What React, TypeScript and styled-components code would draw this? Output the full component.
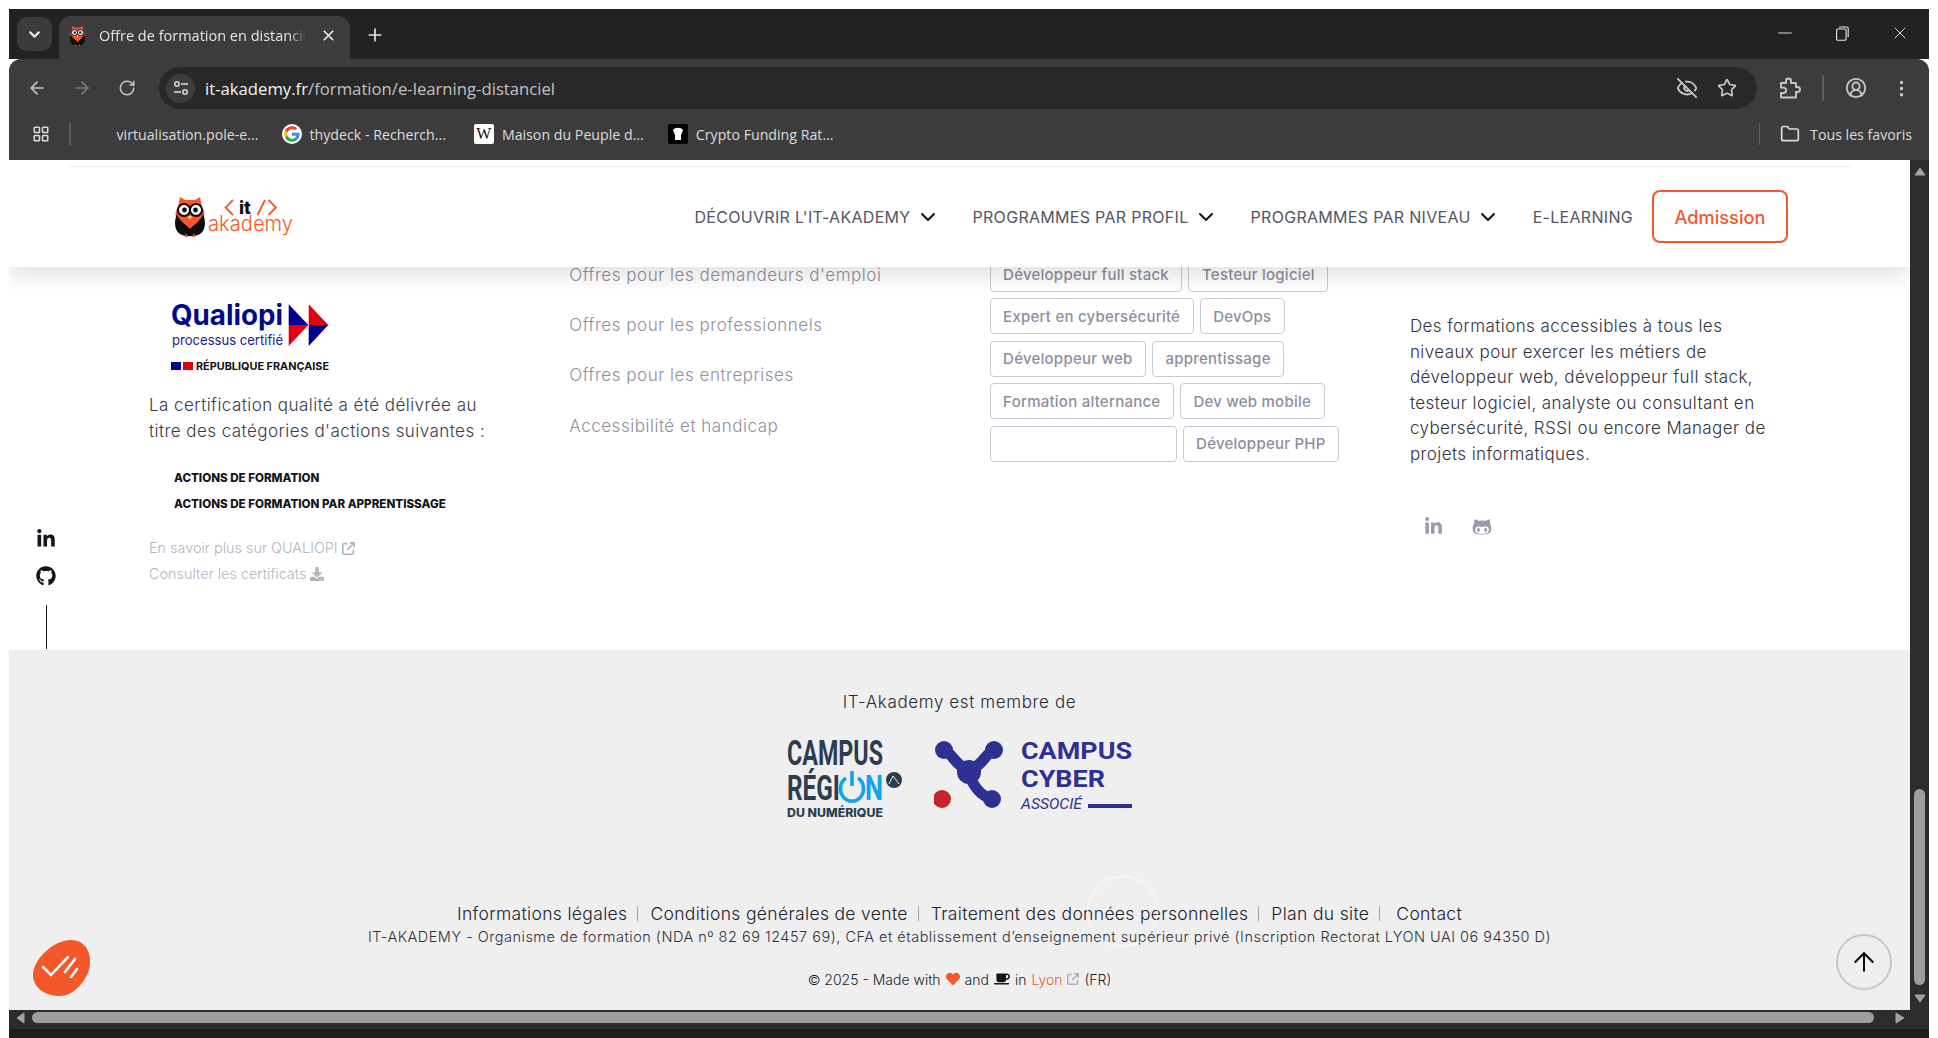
import React from 'react';
import styled, { createGlobalStyle } from 'styled-components';
import { ArrowLeft, ArrowRight, RotateCw, Plus, X, EyeOff, Star, CircleUserRound, MoreVertical, LayoutGrid, Folder, Minus, ChevronDown, ArrowUp } from 'lucide-react';
import { FaLinkedinIn, FaGithub, FaGithubAlt, FaHeart, FaCoffee, FaDownload } from 'react-icons/fa';
import { FaArrowUpRightFromSquare } from 'react-icons/fa6';

const UI = `"Open Sans", "Liberation Sans", sans-serif`;
const WEB = `Inter, "Liberation Sans", sans-serif`;

const Global = createGlobalStyle`
  html, body { margin: 0; padding: 0; background: #fff; overflow: hidden; }
  * { box-sizing: border-box; }
`;

const Frame = styled.div`
  width: 1938px; height: 1038px; padding: 9px 9px 0; background: #fff;
  display: flex; flex-direction: column; overflow: hidden;
`;
const TabStrip = styled.div`
  height: 50px; flex: none; background: #202322; display: flex; align-items: flex-end;
  padding-left: 8px; color: #e8e8e8; font-family: ${UI};
`;
const TabSwitcher = styled.div`
  width: 35px; height: 34px; margin-bottom: 8px; border-radius: 10px; background: #3a3b3b;
  display: flex; align-items: center; justify-content: center; color: #e8e8e8;
`;
const Tab = styled.div`
  width: 291px; height: 43px; margin-left: 7px; border-radius: 12px 12px 0 0; background: #3c3c3c;
  display: flex; align-items: center; padding: 0 13px 4px 11px; gap: 14px; position: relative;
`;
const TabTitle = styled.span`
  flex: 1; font-size: 14.5px; white-space: nowrap; overflow: hidden; color: #e6e6e6;
  mask-image: linear-gradient(90deg, #000 92%, transparent);
`;
const NewTab = styled.div` margin: 0 0 12px 15px; height: 24px; display: flex; align-items: center; color: #e8e8e8; `;
const WindowButtons = styled.div` margin-left: auto; height: 100%; display: flex; align-items: center; padding-bottom: 2px; color: #e8e8e8; `;
const WindowButton = styled.div`
  width: 57.5px; display: flex; justify-content: center; align-items: center;
`;
const Toolbar = styled.div`
  height: 101px; flex: none; background: #3c3c3c; border-radius: 12px 12px 0 0; display: flex; flex-direction: column;
  color: #c7c7c7; font-family: ${UI};
`;
const NavRow = styled.div` height: 58px; padding: 8px 0 0 5px; display: flex; align-items: flex-start; `;
const NavButton = styled.div<{ $w: number; $dim?: boolean }>`
  width: ${p => p.$w}px; height: 42px; display: flex; align-items: center; justify-content: center;
  color: ${p => (p.$dim ? '#7d7d7d' : '#c7c7c7')};
`;
const Omnibox = styled.div`
  width: 1598px; height: 42px; margin-left: 9px; border-radius: 21px; background: #282828; display: flex; align-items: center; padding: 0 20px 0 7px;
`;
const TuneBadge = styled.div`
  width: 29px; height: 29px; border-radius: 50%; background: #3c3c3c; display: flex; align-items: center; justify-content: center; margin-right: 10px;
`;
const Url = styled.div` font-size: 16.7px; color: #c2c2c2; flex: 1; white-space: nowrap; `;
const Host = styled.span` color: #f2f2f2; `;
const OmniIcons = styled.div` display: flex; align-items: center; gap: 19px; color: #c7c7c7; `;
const ToolIcons = styled.div` display: flex; align-items: center; height: 42px; color: #c7c7c7; margin-left: 20px; `;
const VSep = styled.div<{ $h: number; $mx: number }>`
  width: 1.5px; height: ${p => p.$h}px; background: #5d5d5d; margin: 0 ${p => p.$mx}px;
`;
const Dots = styled.div` margin-left: 24px; display: flex; `;
const BookmarkRow = styled.div` height: 43px; display: flex; align-items: center; padding: 0 0 9px 23px; font-size: 14.2px; color: #dcdcdc; `;
const Bookmark = styled.div<{ $ml: number }>`
  display: flex; align-items: center; gap: 8px; margin-left: ${p => p.$ml}px; white-space: nowrap;
`;
const FavSquare = styled.div<{ $bg: string; $c: string }>`
  width: 20px; height: 20px; border-radius: 2px; background: ${p => p.$bg}; color: ${p => p.$c};
  font: 400 16px "Liberation Serif", serif; display: flex; align-items: center; justify-content: center;
`;
const AllFav = styled.div` margin-left: auto; padding-right: 17px; display: flex; align-items: center; gap: 10px; `;

const Body = styled.div` height: 850px; flex: none; display: flex; `;
const Viewport = styled.div` width: 1901px; height: 850px; position: relative; overflow: hidden; background: #fff; font-family: ${WEB}; display: flex; flex-direction: column; `;
const VBar = styled.div` width: 19px; background: #2c2c2c; display: flex; flex-direction: column; align-items: center; padding: 6px 0 5px; `;
const Thumb = styled.div` width: 11px; height: 196px; border-radius: 6px; background: #9e9e9e; margin: auto 0 8px; `;
const HBar = styled.div` height: 19px; flex: none; background: #2c2c2c; display: flex; align-items: center; padding: 0 23px 4px 6px; `;
const HThumb = styled.div` height: 11px; flex: 1; margin: 0 20px 0 5px; border-radius: 6px; background: #9e9e9e; `;
const Tail = styled.div` flex: 1; background: #1f1f1f; `;

const Header = styled.header`
  height: 107px; flex: none; background: #fff; box-shadow: 0 8px 22px rgba(0,0,0,.12); position: relative; z-index: 2;
  display: flex; align-items: center; justify-content: space-between; padding: 6px 122px 0 165px;
  &::before { content: ''; position: absolute; left: 59px; right: 58px; top: 6px; height: 1px; background: #eeeeee; }
`;
const Nav = styled.nav` display: flex; align-items: center; `;
const NavList = styled.div` display: flex; align-items: center; gap: 33px; `;
const NavItem = styled.div`
  display: flex; align-items: center; gap: 5px; font-size: 16px; font-weight: 400; color: #55555f; letter-spacing: .3px; white-space: nowrap;
  svg { color: #111; }
`;
const Admission = styled.div`
  width: 136px; height: 53px; margin-left: 19px; padding-top: 1px; border: 2px solid #f4572a; border-radius: 8px; color: #f4572a;
  display: flex; align-items: center; justify-content: center; font-size: 18.2px; font-weight: 500;
`;

const Main = styled.main`
  height: 393px; flex: none; margin-top: -10px; padding-left: 140px;
  display: grid; grid-template-columns: repeat(4, 420.3px); position: relative; z-index: 1;
`;
const QualiCol = styled.div` padding-top: 46px; display: flex; flex-direction: column; `;
const QualiLogo = styled.div` margin-left: 22px; height: 69px; `;
const QualiText = styled.p`
  margin: 20px 0 0; font-size: 17px; line-height: 26px; font-weight: 300; color: #3a3a4a; letter-spacing: .45px; white-space: nowrap;
`;
const ActionList = styled.ul` list-style: none; margin: 21px 0 0; padding: 0 0 0 25px; `;
const ActionItem = styled.li` font-size: 11.6px; line-height: 26px; font-weight: 800; color: #14141c; white-space: nowrap; `;
const SoftLinks = styled.div` margin-top: 18px; display: flex; flex-direction: column; `;
const SoftLink = styled.a`
  font-size: 14.4px; line-height: 26px; font-weight: 300; color: #b4b4c0; display: flex; align-items: center; gap: 4px;
`;
const OfferCol = styled.div` padding-top: 5px; display: flex; flex-direction: column; gap: 24.2px; `;
const Offer = styled.a` font-size: 17px; line-height: 26px; font-weight: 300; color: #8f8f9c; letter-spacing: .52px; white-space: nowrap; `;
const Tags = styled.div` width: 370px; margin-top: -1px; display: flex; flex-wrap: wrap; align-content: flex-start; gap: 6.4px 6px; `;
const Tag = styled.a<{ $blank?: number }>`
  height: 36px; padding: 0 12.5px; border: 1px solid #c9c9d6; border-radius: 4px; font-size: 15px; font-weight: 500; letter-spacing: .24px; color: #8e8e9f;
  display: flex; align-items: center; white-space: nowrap; width: ${p => (p.$blank ? `${p.$blank}px` : 'auto')};
`;
const AboutCol = styled.div` padding-top: 57px; display: flex; flex-direction: column; `;
const About = styled.p` margin: 0; width: 365px; font-size: 17px; line-height: 25.6px; font-weight: 300; color: #33333f; letter-spacing: .42px; `;
const AboutSocial = styled.div` margin-top: 49px; padding-left: 14px; display: flex; align-items: center; gap: 29px; color: #9a9aae; `;

const Footer = styled.footer`
  flex: 1; background: #efefef; display: flex; flex-direction: column; align-items: center; padding-top: 42px; color: #2a2a36;
`;
const Member = styled.div` font-size: 17px; line-height: 20px; font-weight: 300; letter-spacing: .62px; `;
const LogoRow = styled.div` margin-top: 28px; height: 77px; display: flex; align-items: flex-start; gap: 32px; `;
const LegalLinks = styled.div` margin-top: 83px; height: 26px; display: flex; align-items: center; font-size: 17.5px; font-weight: 300; color: #22222e; letter-spacing: .33px; `;
const Pipe = styled.span<{ $ml?: number; $mr?: number }>`
  width: 1px; height: 15px; background: #a5a5b0; margin: 0 ${p => p.$mr ?? 12}px 0 ${p => p.$ml ?? 10}px;
`;
const Legal = styled.div` height: 22px; line-height: 22px; font-size: 14.5px; font-weight: 300; color: #30303c; letter-spacing: .5px; white-space: nowrap; `;
const Copy = styled.div` margin-top: 20px; height: 22px; display: flex; align-items: center; gap: 5px; font-size: 14px; font-weight: 300; color: #22222e; `;
const Lyon = styled.span` color: #f4572a; `;
const Muted = styled.span` color: #b0b0bc; display: inline-flex; `;

const SideRail = styled.div`
  position: absolute; left: 27px; top: 369px; width: 20px; display: flex; flex-direction: column; align-items: center; color: #14141c; z-index: 3;
`;
const RailLine = styled.div` width: 1px; height: 44px; background: #14141c; margin-top: 19px; `;
const BlobButton = styled.div` position: absolute; left: 24px; top: 780px; width: 58px; height: 56px; z-index: 3; `;
const UpButton = styled.div`
  position: absolute; left: 1827px; top: 774px; width: 56px; height: 56px; border-radius: 50%; border: 2px solid #c4c6d0;
  display: flex; align-items: center; justify-content: center; color: #0a0a0a; z-index: 3;
`;
const GhostRing = styled.div`
  position: absolute; left: 1078px; top: 716px; width: 71px; height: 71px; border-radius: 50%; border: 1px solid rgba(255,255,255,.75); z-index: 3;
`;

const Owl = ({ h }: { h: number }) => (
  <svg width={(h * 30) / 40} height={h} viewBox="0 0 30 40" style={{ flex: 'none' }}>
    <path d="M5 0 L10 3 H20 L25 0 L27 10 C30 14 30 18 28 22 L15 30 L2 22 C0 18 0 14 3 10 Z" fill="#f4572a" />
    <path d="M2 17 C-1 24 -1 33 5 37 C10 40 20 40 25 37 C31 33 31 24 28 17 C27 22 21 27 15 30 C9 27 3 22 2 17 Z" fill="#0d0d0d" />
    <path d="M7 24 L15 32 L23 24 C20 21 10 21 7 24 Z" fill="#f4572a" />
    <path d="M11 36 L10 40 H13 Z M19 36 L20 40 H17 Z" fill="#f4572a" />
    <circle cx="9" cy="13" r="6" fill="#fff" stroke="#0d0d0d" strokeWidth="2" />
    <circle cx="21" cy="13" r="6" fill="#fff" stroke="#0d0d0d" strokeWidth="2" />
    <circle cx="9.5" cy="13" r="2.4" fill="#0d0d0d" />
    <circle cx="20.5" cy="13" r="2.4" fill="#0d0d0d" />
    <path d="M13 19 L15 23 L17 19 Z" fill="#f9c09b" />
  </svg>
);

const SiteLogo = () => (
  <svg width="121" height="40" viewBox="0 0 121 40" style={{ flex: 'none' }}>
    <g transform="translate(1 0)"><Owl h={40} /></g>
    <path d="M59 3 L51.5 10.5 L59 18" fill="none" stroke="#f4572a" strokeWidth="1.8" />
    <path d="M94.5 3 L102 10.5 L94.5 18" fill="none" stroke="#f4572a" strokeWidth="1.8" />
    <text x="65" y="17" fontFamily="Inter, sans-serif" fontWeight="800" fontSize="18" fill="#111">it</text>
    <path d="M83.5 18 L91 3" stroke="#f4572a" strokeWidth="1.8" />
    <text x="34" y="34" fontFamily="Inter, sans-serif" fontWeight="300" fontSize="21" fill="#f4572a" textLength="85" lengthAdjust="spacingAndGlyphs">akademy</text>
  </svg>
);

const Qualiopi = () => (
  <svg width="158" height="69" viewBox="0 0 158 69">
    <text x="0" y="22" fontFamily="Inter, sans-serif" fontWeight="700" fontSize="28" fill="#000a8c" textLength="112" lengthAdjust="spacingAndGlyphs">Qualiopi</text>
    <text x="1" y="42" fontFamily="Inter, sans-serif" fontWeight="400" fontSize="14" fill="#22228c" textLength="111" lengthAdjust="spacingAndGlyphs">processus certifié</text>
    <path d="M117.7 1.3 L137.3 22 H117.7 Z M137.7 22 H157.3 L137.7 43 Z" fill="#00008f" />
    <path d="M117.7 43 L137.3 22 H117.7 Z M137.7 1.3 L157.3 22 H137.7 Z" fill="#e1000f" />
    <rect x="0" y="59" width="10" height="8" fill="#00008f" />
    <rect x="10" y="59" width="2" height="8" fill="#fff" />
    <rect x="12" y="59" width="10" height="8" fill="#e1000f" />
    <text x="25" y="67" fontFamily="Inter, sans-serif" fontWeight="700" fontSize="11" fill="#111" textLength="133" lengthAdjust="spacingAndGlyphs">RÉPUBLIQUE FRANÇAISE</text>
  </svg>
);

const CampusRegion = () => (
  <svg width="115" height="77" viewBox="0 0 115 77">
    <g fontFamily="Roboto, sans-serif" fontWeight="700" fontSize="35">
      <text x="0" y="25" fill="#2b3e50" textLength="96" lengthAdjust="spacingAndGlyphs">CAMPUS</text>
      <text x="0" y="60" fill="#2b3e50" textLength="53" lengthAdjust="spacingAndGlyphs">RÉGI</text>
      <text x="78" y="60" fill="#12a5e8" textLength="18" lengthAdjust="spacingAndGlyphs">N</text>
    </g>
    <path d="M59 38 A11.5 12.5 0 1 0 71 38" fill="none" stroke="#12a5e8" strokeWidth="3.6" />
    <path d="M65 31 V46" stroke="#12a5e8" strokeWidth="3.6" />
    <text x="0" y="77" fontFamily="Inter, sans-serif" fontWeight="800" fontSize="11.5" fill="#2b3e50" textLength="96" lengthAdjust="spacingAndGlyphs">DU NUMÉRIQUE</text>
    <circle cx="107" cy="40" r="8" fill="#2b3e50" />
    <path d="M102 44 L106 36 L112 44" fill="none" stroke="#efefef" strokeWidth="1" />
  </svg>
);

const CampusCyber = () => (
  <svg width="198" height="70" viewBox="0 0 198 70">
    <g fill="none" stroke="#2e3192" strokeWidth="11" strokeLinecap="round">
      <path d="M10 10 C18 12 22 28 35 29 C48 28 52 12 60 10" />
      <path d="M33 30 C38 44 46 56 58 59" />
    </g>
    <circle cx="10" cy="10" r="9" fill="#2e3192" />
    <circle cx="60" cy="10" r="9" fill="#2e3192" />
    <circle cx="58" cy="59" r="9" fill="#2e3192" />
    <circle cx="35" cy="32" r="12" fill="#2e3192" />
    <circle cx="8" cy="59" r="9" fill="#c4262e" />
    <g fontFamily="Roboto, sans-serif" fontWeight="700" fontSize="24" fill="#2e3192">
      <text x="87" y="19" textLength="111" lengthAdjust="spacingAndGlyphs">CAMPUS</text>
      <text x="87" y="47" textLength="84" lengthAdjust="spacingAndGlyphs">CYBER</text>
    </g>
    <text x="87" y="69" fontFamily="Roboto, sans-serif" fontStyle="italic" fontSize="14.5" fill="#2e3192" textLength="61" lengthAdjust="spacingAndGlyphs">ASSOCIÉ</text>
    <rect x="154" y="64" width="44" height="4" fill="#2e3192" />
  </svg>
);

const GoogleG = () => (
  <svg width="20" height="20" viewBox="0 0 48 48" style={{ background: '#fff', borderRadius: '50%', padding: 2 }}>
    <path fill="#EA4335" d="M24 9.5c3.5 0 6.7 1.2 9.2 3.6l6.9-6.9C35.9 2.4 30.5 0 24 0 14.6 0 6.5 5.4 2.6 13.2l8 6.2C12.5 13.6 17.8 9.5 24 9.5z" />
    <path fill="#4285F4" d="M46.9 24.5c0-1.6-.1-3.1-.4-4.5H24v9h12.9c-.6 3-2.2 5.5-4.8 7.2l7.7 6c4.5-4.2 7.1-10.3 7.1-17.7z" />
    <path fill="#FBBC05" d="M10.5 28.6c-.5-1.4-.8-3-.8-4.6s.3-3.2.8-4.6l-8-6.2C.9 16.5 0 20.1 0 24s.9 7.5 2.6 10.8l7.9-6.2z" />
    <path fill="#34A853" d="M24 48c6.5 0 11.9-2.1 15.9-5.8l-7.7-6c-2.2 1.4-4.9 2.3-8.2 2.3-6.2 0-11.5-4.2-13.4-9.8l-8 6.2C6.5 42.6 14.6 48 24 48z" />
  </svg>
);

const Tune = () => (
  <svg width="18" height="18" viewBox="0 0 18 18" fill="none" stroke="#d5d5d5" strokeWidth="1.6">
    <circle cx="5" cy="5" r="2.2" /><path d="M9 5 H16" />
    <circle cx="13" cy="13" r="2.2" /><path d="M2 13 H9" />
  </svg>
);

const Restore = () => (
  <svg width="13" height="15" viewBox="0 0 13 15" fill="none" stroke="#e8e8e8" strokeWidth="1.1">
    <rect x="0.6" y="3" width="9.5" height="11.2" rx="1.2" /><path d="M3 1 H10.8 Q12.2 1 12.2 2.4 V11" />
  </svg>
);

const Extension = () => (
  <svg width="24" height="24" viewBox="0 0 24 24" fill="none" stroke="#c7c7c7" strokeWidth="1.9" strokeLinejoin="round">
    <path d="M4 7 H9 V5 a2.5 2.5 0 0 1 5 0 V7 H19 V11 H20.5 a2.5 2.5 0 0 1 0 5 H19 V21.5 H4 V17 H6.5 a2.7 2.7 0 0 0 0 -5.4 H4 Z" />
  </svg>
);

const Blob = () => (
  <svg width="58" height="56" viewBox="0 0 58 56">
    <path d="M38 0 C52 0 58 12 57 24 C56 38 42 56 27 56 C10 56 0 46 0 35 C0 20 20 0 38 0 Z" fill="#f4572a" />
    <g fill="none" stroke="#fff" strokeWidth="2.6" strokeLinecap="round">
      <path d="M10 27 L18 35 L35 17" />
      <path d="M42 19 L32 32" />
      <path d="M44 29 L38 37" />
    </g>
  </svg>
);

const Triangle = ({ dir }: { dir: 'up' | 'down' | 'left' | 'right' }) => {
  const d = { up: 'M1 9 L6 2 L11 9 Z', down: 'M1 2 L11 2 L6 9 Z', left: 'M9 1 L9 11 L2 6 Z', right: 'M2 1 L2 11 L10 6 Z' }[dir];
  return <svg width="12" height="12" viewBox="0 0 12 12" style={{ flex: 'none' }}><path d={d} fill="#a3a3a3" stroke="#a3a3a3" strokeLinejoin="round" /></svg>;
};

const nav = ["DÉCOUVRIR L'IT-AKADEMY", 'PROGRAMMES PAR PROFIL', 'PROGRAMMES PAR NIVEAU'];
const offers = ["Offres pour les demandeurs d'emploi", 'Offres pour les professionnels', 'Offres pour les entreprises', 'Accessibilité et handicap'];
const tags = ['Développeur full stack', 'Testeur logiciel', 'Expert en cybersécurité', 'DevOps', 'Développeur web', 'apprentissage', 'Formation alternance', 'Dev web mobile'];

export default function App() {
  return (
    <Frame>
      <Global />
      <TabStrip>
        <TabSwitcher><ChevronDown size={17} strokeWidth={3} /></TabSwitcher>
        <Tab>
          <Owl h={20} />
          <TabTitle>Offre de formation en distanciel</TabTitle>
          <X size={17} strokeWidth={2.4} />
        </Tab>
        <NewTab><Plus size={20} strokeWidth={2} /></NewTab>
        <WindowButtons>
          <WindowButton><Minus size={22} strokeWidth={1} /></WindowButton>
          <WindowButton><Restore /></WindowButton>
          <WindowButton><X size={20} strokeWidth={1.1} /></WindowButton>
        </WindowButtons>
      </TabStrip>
      <Toolbar>
        <NavRow>
          <NavButton $w={46}><ArrowLeft size={20} /></NavButton>
          <NavButton $w={44} $dim><ArrowRight size={20} /></NavButton>
          <NavButton $w={46}><RotateCw size={18} /></NavButton>
          <Omnibox>
            <TuneBadge><Tune /></TuneBadge>
            <Url><Host>it-akademy.fr</Host>/formation/e-learning-distanciel</Url>
            <OmniIcons>
              <EyeOff size={22} />
              <Star size={20} />
            </OmniIcons>
          </Omnibox>
          <ToolIcons>
            <Extension />
            <VSep $h={26} $mx={21} />
            <CircleUserRound size={22} />
            <Dots><MoreVertical size={21} /></Dots>
          </ToolIcons>
        </NavRow>
        <BookmarkRow>
          <LayoutGrid size={18} />
          <VSep $h={22} $mx={19} />
          <Bookmark $ml={27}>virtualisation.pole-e...</Bookmark>
          <Bookmark $ml={23}><GoogleG />thydeck - Recherch...</Bookmark>
          <Bookmark $ml={28}><FavSquare $bg="#fff" $c="#111">W</FavSquare>Maison du Peuple d...</Bookmark>
          <Bookmark $ml={24}><FavSquare $bg="#000" $c="#fff"><svg width="12" height="14" viewBox="0 0 12 14"><path d="M1 3 C3 0 9 0 11 3 L9 8 V13 H3 V8 Z" fill="#fff" /></svg></FavSquare>Crypto Funding Rat...</Bookmark>
          <AllFav>
            <VSep $h={22} $mx={0} />
            <Folder size={20} style={{ marginLeft: 10 }} />
            <span>Tous les favoris</span>
          </AllFav>
        </BookmarkRow>
      </Toolbar>
      <Body>
        <Viewport>
          <Header>
            <SiteLogo />
            <Nav>
              <NavList>
                {nav.map(n => <NavItem key={n}>{n}<ChevronDown size={24} strokeWidth={2} /></NavItem>)}
                <NavItem>E-LEARNING</NavItem>
              </NavList>
              <Admission>Admission</Admission>
            </Nav>
          </Header>
          <Main>
            <QualiCol>
              <QualiLogo><Qualiopi /></QualiLogo>
              <QualiText>La certification qualité a été délivrée au<br />titre des catégories d'actions suivantes :</QualiText>
              <ActionList>
                <ActionItem>ACTIONS DE FORMATION</ActionItem>
                <ActionItem>ACTIONS DE FORMATION PAR APPRENTISSAGE</ActionItem>
              </ActionList>
              <SoftLinks>
                <SoftLink>En savoir plus sur QUALIOPI <FaArrowUpRightFromSquare size={13} /></SoftLink>
                <SoftLink>Consulter les certificats <FaDownload size={14} /></SoftLink>
              </SoftLinks>
            </QualiCol>
            <OfferCol>
              {offers.map(o => <Offer key={o}>{o}</Offer>)}
            </OfferCol>
            <Tags>
              {tags.map(t => <Tag key={t}>{t}</Tag>)}
              <Tag $blank={187} />
              <Tag>Développeur PHP</Tag>
            </Tags>
            <AboutCol>
              <About>Des formations accessibles à tous les niveaux pour exercer les métiers de développeur web, développeur full stack, testeur logiciel, analyste ou consultant en cybersécurité, RSSI ou encore Manager de projets informatiques.</About>
              <AboutSocial><FaLinkedinIn size={19} /><FaGithubAlt size={20} /></AboutSocial>
            </AboutCol>
          </Main>
          <Footer>
            <Member>IT-Akademy est membre de</Member>
            <LogoRow><CampusRegion /><CampusCyber /></LogoRow>
            <LegalLinks>
              <span>Informations légales</span><Pipe />
              <span>Conditions générales de vente</span><Pipe />
              <span>Traitement des données personnelles</span><Pipe />
              <span>Plan du site</span><Pipe $mr={16} />
              <span>Contact</span>
            </LegalLinks>
            <Legal>IT-AKADEMY - Organisme de formation (NDA nº 82 69 12457 69), CFA et établissement d’enseignement supérieur privé (Inscription Rectorat LYON UAI 06 94350 D)</Legal>
            <Copy>© 2025 - Made with <FaHeart size={14} color="#f4572a" /> and <FaCoffee size={16} color="#14141c" /> in <Lyon>Lyon</Lyon> <Muted><FaArrowUpRightFromSquare size={12} /></Muted> (FR)</Copy>
          </Footer>
          <SideRail>
            <FaLinkedinIn size={20} />
            <FaGithub size={20} style={{ marginTop: 17 }} />
            <RailLine />
          </SideRail>
          <GhostRing />
          <BlobButton><Blob /></BlobButton>
          <UpButton><ArrowUp size={30} strokeWidth={1.6} /></UpButton>
        </Viewport>
        <VBar>
          <Triangle dir="up" />
          <Thumb />
          <Triangle dir="down" />
        </VBar>
      </Body>
      <HBar>
        <Triangle dir="left" />
        <HThumb />
        <Triangle dir="right" />
      </HBar>
      <Tail />
    </Frame>
  );
}
